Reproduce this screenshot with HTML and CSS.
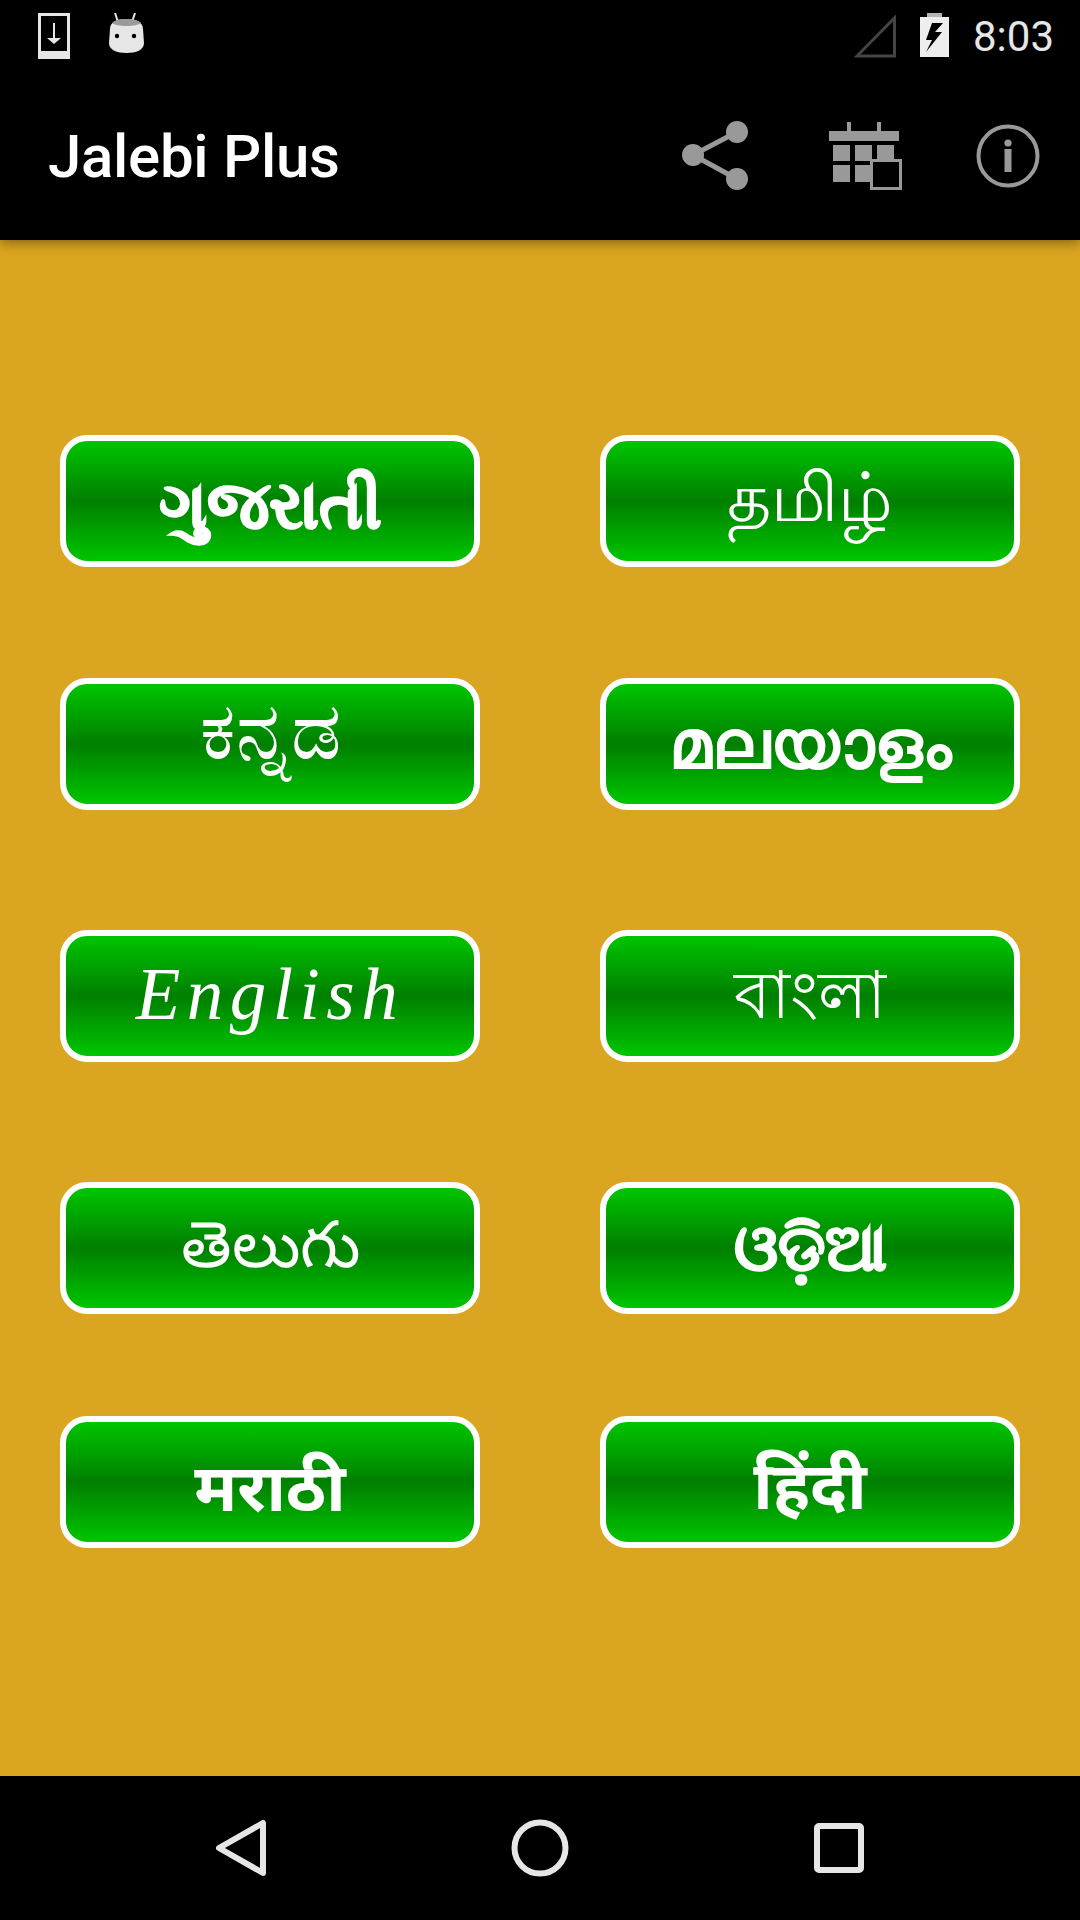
FILE: index.html
```html
<!DOCTYPE html>
<html lang="en">
<head>
  <meta charset="UTF-8" />
  <title>Jalebi Plus</title>
  <link rel="stylesheet" href="styles.css">
</head>
<body>
  <div class="app">
    <div class="status-bar">
      <div class="status-left">
        <svg class="ic-download" width="32" height="46" viewBox="0 0 32 46">
          <path fill="#e6e6e6" fill-rule="evenodd" d="M0 0H32V46H0ZM3 3V38H29V3Z"/>
          <path fill="#e6e6e6" d="M15 10H17V25H23L16 31L9 25H15Z"/>
        </svg>
        <svg class="ic-face" width="35" height="40" viewBox="0 0 35 40">
          <path stroke="#e6e6e6" stroke-width="2" d="M6 0L9 9M26 0L23 9"/>
          <path fill="#e6e6e6" d="M1 16C1 9 8 6 17.500 6C27 6 34 9 34 16L35 30C35 37 27 40 17.500 40C8 40 0 37 0 30Z"/>
          <path fill="#9a9a9a" d="M3 10C6 7 11 6 17.500 6C24 6 29 7 32 10C28 14 7 14 3 10Z"/>
          <circle cx="8" cy="23" r="2.200" fill="#000"/>
          <circle cx="25" cy="23" r="2.200" fill="#000"/>
        </svg>
      </div>
      <div class="status-right">
        <svg width="42" height="43" viewBox="0 0 42 43">
          <path fill="none" stroke="#444" stroke-width="3" d="M3 41H40.500V3Z"/>
        </svg>
        <svg width="29" height="44" viewBox="0 0 29 44">
          <path fill="#b5b5b5" d="M7 0H22V4H7Z"/>
          <path fill="#eee" d="M0 4H29V44H0Z"/>
          <path fill="#000" d="M23 10H12L6 27H12L6 39L22 19H15Z"/>
        </svg>
        <span class="clock">8:03</span>
      </div>
    </div>

    <header class="toolbar">
      <h1 class="toolbar-title">Jalebi Plus</h1>
      <div class="toolbar-actions">
        <svg width="74" height="70" viewBox="0 0 74 70">
          <path fill="none" stroke="#999" stroke-width="5" d="M56 11L12 34L56 58"/>
          <circle cx="56" cy="11" r="11" fill="#999"/>
          <circle cx="12" cy="34" r="11" fill="#999"/>
          <circle cx="56" cy="58" r="11" fill="#999"/>
        </svg>
        <svg width="73" height="68" viewBox="0 0 73 68">
          <path fill="#999" d="M18 0H22V9H48V0H52V9H70V19H0V9H18Z"/>
          <path fill="#999" d="M4 23H21V39H4ZM26 23H43V39H26ZM48 23H65V39H48ZM4 43H21V60H4ZM26 43H43V60H26Z"/>
          <rect x="42.500" y="38.500" width="29" height="28" fill="#000" stroke="#999" stroke-width="3"/>
        </svg>
        <svg width="64" height="64" viewBox="0 0 64 64">
          <circle cx="32" cy="32" r="29.500" fill="none" stroke="#999" stroke-width="4"/>
          <circle cx="32" cy="19" r="3.600" fill="#999"/>
          <rect x="28.500" y="25" width="7" height="23" fill="#999"/>
        </svg>
      </div>
    </header>

    <main class="lang-grid">
      <div class="lang-row">
        <a class="lang-btn bold lang-gu" lang="gu">ગુજરાતી</a>
        <a class="lang-btn lang-ta" lang="ta">தமிழ்</a>
      </div>
      <div class="lang-row row-2">
        <a class="lang-btn lang-kn" lang="kn">ಕನ್ನಡ</a>
        <a class="lang-btn bold lang-ml" lang="ml">മലയാളം</a>
      </div>
      <div class="lang-row row-3">
        <a class="lang-btn lang-en" lang="en">English</a>
        <a class="lang-btn lang-bn" lang="bn">বাংলা</a>
      </div>
      <div class="lang-row row-3">
        <a class="lang-btn lang-te" lang="te">తెలుగు</a>
        <a class="lang-btn bold lang-or" lang="or">ଓଡ଼ିଆ</a>
      </div>
      <div class="lang-row row-5">
        <a class="lang-btn bold lang-mr" lang="mr">मराठी</a>
        <a class="lang-btn bold lang-hi" lang="hi">हिंदी</a>
      </div>
    </main>

    <nav class="nav-bar">
      <svg width="52" height="58" viewBox="0 0 52 58">
        <path fill="none" stroke="#e6e6e6" stroke-width="6" stroke-linejoin="round" d="M48 4V54L4 29Z"/>
      </svg>
      <svg width="58" height="58" viewBox="0 0 58 58">
        <circle cx="29" cy="29" r="25.500" fill="none" stroke="#e6e6e6" stroke-width="6"/>
      </svg>
      <svg width="52" height="52" viewBox="0 0 52 52">
        <rect x="4" y="4" width="44" height="44" rx="2" fill="none" stroke="#e6e6e6" stroke-width="6"/>
      </svg>
    </nav>
  </div>
</body>
</html>
```

FILE: styles.css
```css
* {
  box-sizing: border-box;
}

html, body {
  margin: 0;
  padding: 0;
  background: #000;
}

.app {
  width: 1080px;
  height: 1920px;
  display: flex;
  flex-direction: column;
  font-family: Roboto, "Noto Sans", sans-serif;
  overflow: hidden;
}

.status-bar {
  height: 72px;
  padding: 13px 26px 0 38px;
  display: flex;
  justify-content: space-between;
  align-items: flex-start;
  background: #000;
}

.status-left {
  display: flex;
  align-items: flex-start;
  gap: 39px;
}

.status-right {
  display: flex;
  align-items: flex-start;
  gap: 24px;
}

.status-right svg:first-child {
  margin-top: 2px;
}

.clock {
  color: #e6e6e6;
  font-size: 42px;
  line-height: 48px;
}

.toolbar {
  position: relative;
  z-index: 2;
  height: 168px;
  padding: 0 40px 0 48px;
  display: flex;
  justify-content: space-between;
  align-items: center;
  background: #000;
  box-shadow: 0 2px 12px rgba(0, 0, 0, 0.45);
}

.toolbar-title {
  margin: 0;
  color: #fff;
  font-size: 60px;
  font-weight: 500;
  letter-spacing: -0.3px;
}

.toolbar-actions {
  display: flex;
  align-items: center;
  gap: 74px;
}

.lang-grid {
  flex: 1;
  padding: 195px 60px 0;
  display: flex;
  flex-direction: column;
  background: #daa520;
}

.lang-row {
  display: flex;
  justify-content: space-between;
}

.row-2 {
  margin-top: 111px;
}

.row-3 {
  margin-top: 120px;
}

.row-5 {
  margin-top: 102px;
}

.lang-btn {
  width: 420px;
  height: 132px;
  display: flex;
  justify-content: center;
  align-items: center;
  border: 6px solid #fff;
  border-radius: 27px;
  background: linear-gradient(#00cc00, #007f00 50%, #00cc00);
  background-origin: border-box;
  color: #fff;
  line-height: 1;
  font-family: "Noto Sans", "Liberation Sans", sans-serif;
}

.lang-btn.bold {
  font-weight: 700;
}

/* these two come out thin in the fallback font */
.lang-gu, .lang-or {
  -webkit-text-stroke: 1.500px #fff;
}

.lang-gu { font-size: 66px; padding-top: 2px; }
.lang-ta { font-size: 68px; padding-bottom: 12px; }
.lang-kn { font-size: 79px; padding-bottom: 34px; }
.lang-ml { font-size: 68px; padding-bottom: 4px; }
.lang-bn { font-size: 66px; padding-bottom: 8px; }
.lang-te { font-size: 65px; padding-bottom: 12px; }
.lang-or { font-size: 64px; padding-bottom: 4px; }
.lang-mr { font-size: 66px; padding-top: 6px; }
.lang-hi { font-size: 66px; padding-top: 2px; }

.lang-en {
  font-family: "Liberation Serif", serif;
  font-style: italic;
  font-size: 73px;
  letter-spacing: 6.500px;
  padding-bottom: 4px;
}

.nav-bar {
  height: 144px;
  padding: 0 215px;
  display: flex;
  justify-content: space-between;
  align-items: center;
  background: #000;
}
```
